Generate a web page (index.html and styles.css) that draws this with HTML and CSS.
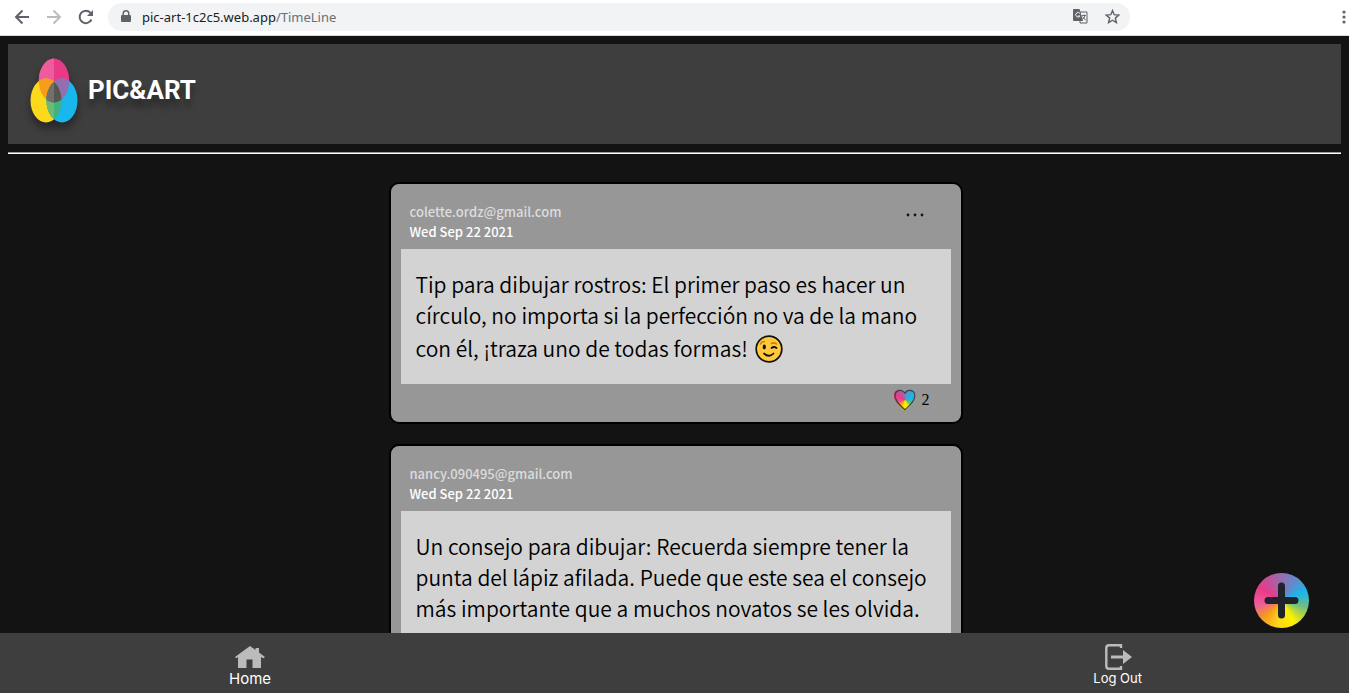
FILE: index.html
```html
<!DOCTYPE html>
<html lang="es">
<head>
<meta charset="utf-8">
<title>Pic&amp;Art</title>
<link rel="stylesheet" href="styles.css">
</head>
<body>
<div class="toolbar">
  <button class="tool" aria-label="Back"><svg width="16" height="16" viewBox="0 0 16 16" fill="none" stroke="#5f6368" stroke-width="2"><path d="M15 8H2M8.500 1.500 2 8l6.500 6.500"/></svg></button>
  <button class="tool" aria-label="Forward"><svg width="16" height="16" viewBox="0 0 16 16" fill="none" stroke="#babcbe" stroke-width="2"><path d="M1 8h13M7.500 1.500 14 8l-6.500 6.500"/></svg></button>
  <button class="tool" aria-label="Reload"><svg width="16" height="16" viewBox="0 0 16 16" fill="none" stroke="#5f6368" stroke-width="2"><path d="M13.500 10.500A6.200 6.200 0 1 1 12.500 3.800"/><path d="M15 1v6H9z" fill="#5f6368" stroke="none"/></svg></button>
  <div class="address">
    <svg width="10" height="13" viewBox="0 0 10 13"><path d="M1.500 5V3.500a3.500 3.500 0 0 1 7 0V5H9a1 1 0 0 1 1 1v5a1 1 0 0 1-1 1H1a1 1 0 0 1-1-1V6a1 1 0 0 1 1-1zM3 5h4V3.500a2 2 0 0 0-4 0z" fill="#5f6368"/></svg>
    <span class="url">pic-art-1c2c5.web.app<span class="path">/TimeLine</span></span>
    <button class="tool" aria-label="Translate"><svg width="15" height="15" viewBox="0 0 15 15"><path d="M7 3h7v11H7z" fill="#f1f3f4" stroke="#5f6368"/><path d="M0 1q0-1 1-1h5.500L10 12H1q-1 0-1-1z" fill="#5f6368"/><path d="M7 4.500A2.300 2.300 0 1 0 7 7H5" fill="none" stroke="#f1f3f4"/><path d="M8.500 6.500h4.500M11 5.500v1M12 6.500q-.5 3-3 4M9.500 7.500l3.500 4" fill="none" stroke="#5f6368" stroke-width=".9"/></svg></button>
    <button class="tool" aria-label="Bookmark"><svg width="15" height="15" viewBox="0 0 15 15" fill="none" stroke="#5f6368" stroke-width="1.400"><path d="m7.500 1.600 1.700 4.100 4.600.4-3.500 3 1.100 4.500-3.900-2.400-3.900 2.400 1.100-4.500-3.500-3 4.600-.4z"/></svg></button>
  </div>
  <button class="tool menu" aria-label="Menu"><svg width="4" height="14" viewBox="0 0 4 14" fill="#5f6368"><circle cx="2" cy="2" r="1.600"/><circle cx="2" cy="7" r="1.600"/><circle cx="2" cy="12" r="1.600"/></svg></button>
</div>
<div class="app">
  <header class="banner">
    <svg class="mark" width="48" height="66" viewBox="0 0 48 66">
      <defs>
        <clipPath id="top"><ellipse cx="24" cy="22.500" rx="15.200" ry="22"/></clipPath>
        <clipPath id="left"><ellipse cx="16" cy="42.500" rx="15.500" ry="22"/></clipPath>
        <clipPath id="right"><ellipse cx="32" cy="42.500" rx="15.500" ry="22"/></clipPath>
      </defs>
      <ellipse cx="24" cy="22.500" rx="15.200" ry="22" fill="#e93a88"/>
      <path d="M0 0h24v66H0z" fill="#ee5c9c" clip-path="url(#top)"/>
      <ellipse cx="16" cy="42.500" rx="15.500" ry="22" fill="#fdd91b"/>
      <ellipse cx="32" cy="42.500" rx="15.500" ry="22" fill="#19b7ec"/>
      <g clip-path="url(#top)"><ellipse cx="16" cy="42.500" rx="15.500" ry="22" fill="#f79c1a"/><ellipse cx="32" cy="42.500" rx="15.500" ry="22" fill="#966db0"/></g>
      <g clip-path="url(#left)"><ellipse cx="32" cy="42.500" rx="15.500" ry="22" fill="#40b27c"/><g clip-path="url(#right)"><path d="M0 0h24v66H0z" fill="#6dba74"/><ellipse cx="24" cy="22.500" rx="15.200" ry="22" fill="#575752"/><path d="M0 0h24v66H0z" fill="#70706e" clip-path="url(#top)"/></g></g>
    </svg>
    <span class="brand">PIC&amp;ART</span>
  </header>
  <hr class="rule">
  <main class="feed">
    <article class="post">
      <header class="post-head">
        <div><p class="author">colette.ordz@gmail.com</p><p class="date">Wed Sep 22 2021</p></div>
        <button class="more" aria-label="Opciones"><svg width="18" height="4" viewBox="0 0 18 4" fill="#151515"><circle cx="2" cy="2" r="1.400"/><circle cx="9" cy="2" r="1.400"/><circle cx="16" cy="2" r="1.400"/></svg></button>
      </header>
      <p class="text">Tip para dibujar rostros: El primer paso es hacer un círculo, no importa si la perfección no va de la mano con él, ¡traza uno de todas formas! <svg class="emoji" role="img" aria-label="guiño" width="28" height="28" viewBox="0 0 28 28" fill="none" stroke-linecap="round"><circle cx="14" cy="14" r="12.800" fill="#ffc83d" stroke="#111" stroke-width="1.700"/><path d="M5.500 9q1-2.500 4-2.500M16.500 8.500q2.500-1.500 5 .5" stroke="#d67d00" stroke-width="1.600"/><ellipse cx="9.300" cy="12" rx="1.600" ry="2.400" fill="#111"/><path d="M16.500 13q2.500-2 5 0M9 18.500q5 4.500 9.500 0" stroke="#111" stroke-width="1.700"/></svg></p>
      <footer class="post-foot">
        <button class="like"><span class="heart"><svg width="22" height="22" viewBox="0 0 22 22"><path d="M11 21C7 17 1 13 1 6.500 1 1 8-.5 11 4c3-4.500 10-3 10 2.500C21 13 15 17 11 21z" fill="none" stroke="#444" stroke-width="1.500"/></svg></span>2</button>
      </footer>
    </article>
    <article class="post">
      <header class="post-head">
        <div><p class="author">nancy.090495@gmail.com</p><p class="date">Wed Sep 22 2021</p></div>
      </header>
      <p class="text">Un consejo para dibujar: Recuerda siempre tener la punta del lápiz afilada. Puede que este sea el consejo más importante que a muchos novatos se les olvida.</p>
    </article>
  </main>
</div>
<button class="add" aria-label="Publicar"><svg width="35" height="37" viewBox="0 0 35 37" stroke="#20232b" stroke-width="7" stroke-linecap="round"><path d="M17.500 4v29M4 18.500h27"/></svg></button>
<nav class="nav">
  <a class="home" href="#"><svg width="30" height="22" viewBox="0 0 30 22"><path d="M15 0 0 11l1.200 1.200L3 11v11h8.500v-8.500h6V22H26V11l2.500 1.200L30 11l-6-4.400V2h-3.500v2z" fill="#bbb"/></svg>Home</a>
  <a class="logout" href="#"><svg width="28" height="26" viewBox="0 0 28 26"><path d="M17 4V1.300H5Q2.300 1.300 2.300 4v18Q2.300 24.700 5 24.700h12V22" fill="none" stroke="#bbb" stroke-width="2.400"/><path d="M7 11.500h12V6l9 7-9 7v-5.500H7z" fill="#bbb"/></svg>Log Out</a>
</nav>
</body>
</html>
```
FILE: styles.css
```css
* { box-sizing: border-box; }
body {
  margin: 0;
  height: 100vh;
  display: flex;
  flex-direction: column;
  background: #131313;
  font-family: "Noto Sans CJK JP", sans-serif;
  overflow: hidden;
}
p { margin: 0; }
svg { display: block; flex: none; }
button { padding: 0; border: 0; background: none; color: inherit; font: inherit; cursor: pointer; }
.toolbar {
  flex: none;
  height: 36px;
  padding: 0 3px 2px 14px;
  display: flex;
  align-items: center;
  gap: 16px;
  background: #fff;
  border-bottom: 1px solid #d9dadc;
}
.tool { flex: none; display: grid; place-items: center; }
.address {
  flex: 0 1 1022px;
  height: 28px;
  margin-left: -2px;
  padding: 0 10px 0 13px;
  display: flex;
  align-items: center;
  gap: 17px;
  border-radius: 14px;
  background: #f1f3f4;
}
.url { flex: 1; margin-left: -6px; color: #202124; font: 13px/20px "Noto Sans", sans-serif; }
.path { color: #6b6f74; }
.menu { margin-left: auto; }
.app { flex: 1; min-height: 0; padding: 8px 8px 0; overflow: hidden; }
.banner {
  height: 100px;
  padding: 0 22px;
  display: flex;
  align-items: center;
  gap: 10px;
  background: #3e3e3e;
}
.mark { margin-bottom: 6px; filter: drop-shadow(0 6px 4px rgba(0, 0, 0, .4)); }
.brand {
  margin-bottom: 8px;
  color: #fff;
  font-family: Roboto, sans-serif;
  font-size: 26px;
  font-weight: 700;
  line-height: 36px;
  text-shadow: 0 8px 6px rgba(0, 0, 0, .35);
}
.rule { height: 2px; margin: 8px 0 28px; border: 0; background: #fff; border-top: 1px solid #9a9a9a; }
.feed {
  max-width: 576px;
  margin: 0 auto;
  padding-left: 2px;
  display: grid;
  gap: 20px;
}
.post { padding: 0 10px; border: 2px solid #000; border-radius: 10px; background: #979797; }
.post-head { display: flex; justify-content: space-between; padding: 18px 27px 7px 9px; font-size: 13px; line-height: 20px; font-weight: 500; }
.author { color: #dcdcdc; }
.date { color: #fff; }
.more { height: 26px; display: grid; place-items: center; }
.text { padding: 20px 15px; background: #d3d3d3; color: #000; font-size: 21px; font-weight: 350; line-height: 31px; }
.emoji { display: inline-block; margin: 4px 0 1px 2px; vertical-align: -7px; }
.post-foot { height: 38px; padding: 0 21px 6px; display: flex; justify-content: flex-end; align-items: center; }
.like { display: flex; align-items: center; gap: 6px; font: 16px/20px "Liberation Serif", serif; }
.heart {
  width: 22px;
  height: 22px;
  background: conic-gradient(#5a8fd0, #19b7ec 75deg, #5fc070 120deg, #fff200 160deg, #ffe800 190deg, #f79c1a 225deg, #ee4c94 260deg, #e93a88 300deg, #966db0);
  clip-path: path("M11 22C7 18 0 13 0 6.500 0 0 8-1.500 11 3c3-4.500 11-3 11 3.500C22 13 15 18 11 22z");
}
.add {
  position: fixed;
  right: 40px;
  bottom: 65px;
  width: 55px;
  height: 55px;
  display: grid;
  place-items: center;
  border-radius: 50%;
  background: conic-gradient(#966db0, #5a8fd0 40deg, #19b7ec 70deg, #70bd80 105deg, #fff200 150deg, #ffd41b 190deg, #f79c1a 225deg, #ee5c9c 260deg, #e93a88 300deg, #966db0);
}
.nav {
  flex: none;
  height: 60px;
  padding: 0 207px 0 229px;
  display: flex;
  justify-content: space-between;
  background: #3e3e3e;
}
.nav a { display: flex; flex-direction: column; align-items: center; color: #fff; text-decoration: none; font-family: Inter, sans-serif; }
.home { padding-top: 13px; gap: 1px; font-size: 15px; line-height: 20px; }
.logout { padding-top: 11px; font-size: 13px; line-height: 16px; }
```
